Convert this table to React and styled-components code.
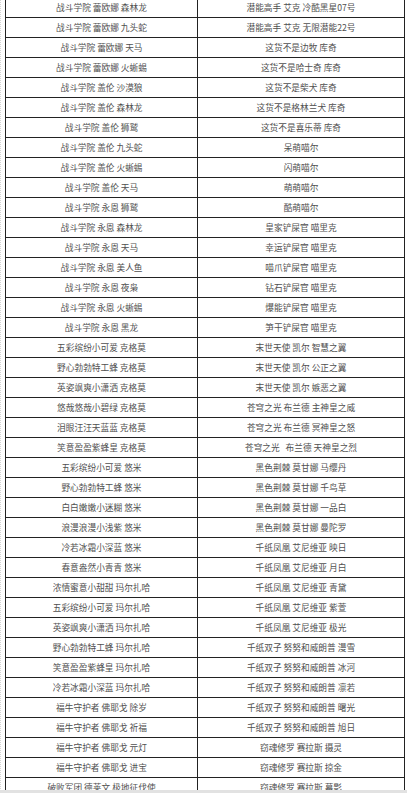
import React from 'react';
import styled, { createGlobalStyle } from 'styled-components';

const GlobalStyle = createGlobalStyle`
  html, body {
    margin: 0;
    padding: 0;
    background: #fff;
    overflow: hidden;
  }
`;

const Page = styled.div`
  height: 793px;
  padding-left: 4px;
  border-left: 1px dotted #d4d4d4;
  box-sizing: border-box;
  overflow: hidden;
`;

const Table = styled.table`
  margin-top: -3px;
  width: 397px;
  border-collapse: collapse;
  table-layout: fixed;
  font-family: "Noto Sans CJK SC", "Liberation Sans", sans-serif;
  font-size: 8.7px;
  color: #505050;
`;

const Cell = styled.td`
  width: ${({ $w }) => $w}px;
  height: 19px;
  padding: 0;
  border: 1px solid #222;
  text-align: center;
  vertical-align: middle;
  white-space: pre;
  line-height: 19px;
`;

const BottomEdge = styled.div`
  position: fixed;
  left: 0;
  right: 0;
  bottom: 0;
  height: 3px;
  background: #e2e2e2;
`;

const rows = [
  ['战斗学院 蕾欧娜 森林龙', '潜能高手 艾克 冷酷黑星07号'],
  ['战斗学院 蕾欧娜 九头蛇', '潜能高手 艾克 无限潜能22号'],
  ['战斗学院 蕾欧娜 天马', '这货不是边牧 库奇'],
  ['战斗学院 蕾欧娜 火蜥蜴', '这货不是哈士奇 库奇'],
  ['战斗学院 盖伦 沙漠狼', '这货不是柴犬 库奇'],
  ['战斗学院 盖伦 森林龙', '这货不是格林兰犬 库奇'],
  ['战斗学院 盖伦 狮鹫', '这货不是喜乐蒂 库奇'],
  ['战斗学院 盖伦 九头蛇', '呆萌喵尔'],
  ['战斗学院 盖伦 火蜥蜴', '闪萌喵尔'],
  ['战斗学院 盖伦 天马', '萌萌喵尔'],
  ['战斗学院 永恩 狮鹫', '酷萌喵尔'],
  ['战斗学院 永恩 森林龙', '皇家铲屎官 喵里克'],
  ['战斗学院 永恩 天马', '幸运铲屎官 喵里克'],
  ['战斗学院 永恩 美人鱼', '喵爪铲屎官 喵里克'],
  ['战斗学院 永恩 夜枭', '钻石铲屎官 喵里克'],
  ['战斗学院 永恩 火蜥蜴', '爆能铲屎官 喵里克'],
  ['战斗学院 永恩 黑龙', '笋干铲屎官 喵里克'],
  ['五彩缤纷小可爱 克格莫', '末世天使 凯尔 智慧之翼'],
  ['野心勃勃特工蜂 克格莫', '末世天使 凯尔 公正之翼'],
  ['英姿飒爽小潇洒 克格莫', '末世天使 凯尔 嫉恶之翼'],
  ['悠哉悠哉小碧绿 克格莫', '苍穹之光 布兰德 主神皇之威'],
  ['泪眼汪汪天蓝蓝 克格莫', '苍穹之光 布兰德 冥神皇之怒'],
  ['笑意盈盈紫蜂皇 克格莫', '苍穹之光   布兰德 天神皇之烈'],
  ['五彩缤纷小可爱 悠米', '黑色荆棘 莫甘娜 马缨丹'],
  ['野心勃勃特工蜂 悠米', '黑色荆棘 莫甘娜 千鸟草'],
  ['白白嫩嫩小迷糊 悠米', '黑色荆棘 莫甘娜 一品白'],
  ['浪漫浪漫小浅紫 悠米', '黑色荆棘 莫甘娜 曼陀罗'],
  ['冷若冰霜小深蓝 悠米', '千纸凤凰 艾尼维亚 映日'],
  ['春意盎然小青青 悠米', '千纸凤凰 艾尼维亚 月白'],
  ['浓情蜜意小甜甜 玛尔扎哈', '千纸凤凰 艾尼维亚 青黛'],
  ['五彩缤纷小可爱 玛尔扎哈', '千纸凤凰 艾尼维亚 紫萱'],
  ['英姿飒爽小潇洒 玛尔扎哈', '千纸凤凰 艾尼维亚 极光'],
  ['野心勃勃特工蜂 玛尔扎哈', '千纸双子 努努和威朗普 漫雪'],
  ['笑意盈盈紫蜂皇 玛尔扎哈', '千纸双子 努努和威朗普 冰河'],
  ['冷若冰霜小深蓝 玛尔扎哈', '千纸双子 努努和威朗普 凛若'],
  ['福牛守护者 佛耶戈 除岁', '千纸双子 努努和威朗普 曙光'],
  ['福牛守护者 佛耶戈 祈福', '千纸双子 努努和威朗普 旭日'],
  ['福牛守护者 佛耶戈 元灯', '窃魂修罗 赛拉斯 摄灵'],
  ['福牛守护者 佛耶戈 进宝', '窃魂修罗 赛拉斯 掠金'],
  ['破败军团 德莱文 极地征伐使', '窃魂修罗 赛拉斯 幕影'],
];

const App = () => (
  <>
    <GlobalStyle />
    <Page>
      <Table>
        <tbody>
          {rows.map(([left, right], i) => (
            <tr key={i}>
              <Cell $w={191}>{left}</Cell>
              <Cell $w={206}>{right}</Cell>
            </tr>
          ))}
        </tbody>
      </Table>
    </Page>
    <BottomEdge />
  </>
);

export default App;
